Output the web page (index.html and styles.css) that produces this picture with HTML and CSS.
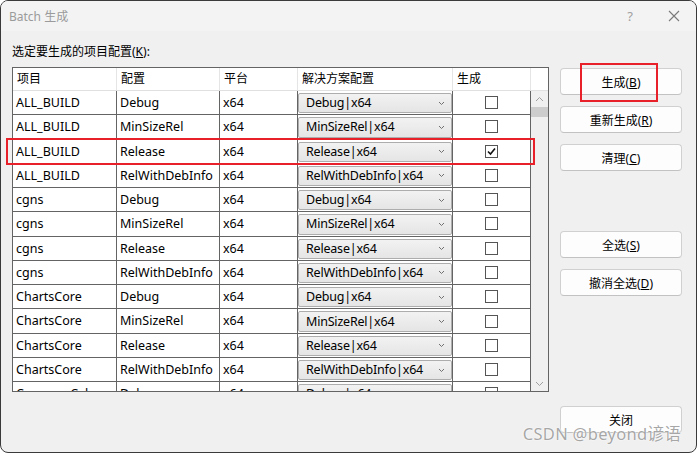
FILE: index.html
```html
<!DOCTYPE html>
<html lang="zh-CN">
<head>
    <meta charset="UTF-8">
    <title>Batch 生成</title>
    <link rel="stylesheet" href="styles.css">
</head>
<body>
    <div class="window">
        <div class="titlebar">
            <span class="title">Batch 生成</span>
            <span class="help">?</span>
            <svg class="close" width="12" height="12" viewBox="0 0 12 12">
                <path d="M1 1 L11 11 M11 1 L1 11" stroke="#7a7a7a" stroke-width="1.1" fill="none"/>
            </svg>
        </div>
        <div class="content">
            <div class="label">选定要生成的项目配置(<u>K</u>):</div>
            <div class="main">
                <div class="grid">
                    <div class="head">
                        <div class="hcell c1">项目</div>
                        <div class="hcell c2">配置</div>
                        <div class="hcell c3">平台</div>
                        <div class="hcell c4">解决方案配置</div>
                        <div class="hcell c5">生成</div>
                        <div class="hcorner"></div>
                    </div>
                    <div class="body">
                        <div class="rows" id="rows"></div>
                        <div class="scrollbar">
                            <div class="arrow">
                                <svg width="9" height="6" viewBox="0 0 9 6"><path d="M1 5 L4.5 1.5 L8 5" stroke="#a0a0a0" fill="none"/></svg>
                            </div>
                            <div class="thumb"></div>
                            <div class="track"></div>
                            <div class="arrow">
                                <svg width="9" height="6" viewBox="0 0 9 6"><path d="M1 1 L4.5 4.5 L8 1" stroke="#a0a0a0" fill="none"/></svg>
                            </div>
                        </div>
                    </div>
                </div>
                <div class="side">
                    <button class="btn">生成(<u>B</u>)</button>
                    <button class="btn">重新生成(<u>R</u>)</button>
                    <button class="btn">清理(<u>C</u>)</button>
                    <button class="btn">全选(<u>S</u>)</button>
                    <button class="btn">撤消全选(<u>D</u>)</button>
                </div>
            </div>
            <div class="footer">
                <button class="btn">关闭</button>
            </div>
        </div>
        <div class="mark mark-build"></div>
        <div class="mark mark-row"></div>
        <div class="watermark">CSDN @beyond谚语</div>
    </div>

    <script>
        const projects = ['ALL_BUILD', 'cgns', 'ChartsCore', 'CommonCalc'];
        const configs = ['Debug', 'MinSizeRel', 'Release', 'RelWithDebInfo'];
        const rowsElement = document.getElementById('rows');

        const chevron = '<svg class="chev" width="7" height="5" viewBox="0 0 7 5"><path d="M1 1 L3.5 3.5 L6 1" stroke="#707070" fill="none"/></svg>';
        const tick = '<svg width="11" height="11" viewBox="0 0 11 11"><path d="M2 5.5 L4.5 8 L9 2.5" stroke="#111" stroke-width="1.6" fill="none"/></svg>';

        let html = '';
        projects.forEach((project, p) => {
            configs.forEach((config, c) => {
                if (p === 3 && c > 0) return;
                const checked = p === 0 && config === 'Release';
                html += `
                <div class="row">
                    <div class="cell c1">${project}</div>
                    <div class="cell c2">${config}</div>
                    <div class="cell c3">x64</div>
                    <div class="cell c4"><div class="combo"><span>${config}|x64</span>${chevron}</div></div>
                    <div class="cell c5"><span class="check">${checked ? tick : ''}</span></div>
                </div>`;
            });
        });
        rowsElement.innerHTML = html;
    </script>
</body>
</html>
```

FILE: styles.css
```css
html, body {
    margin: 0;
    background: #ffffff;
}
body {
    font-family: "Noto Sans", "Noto Sans CJK SC", sans-serif;
    font-size: 12px;
    color: #000;
}
.window {
    position: relative;
    box-sizing: border-box;
    width: 697px;
    height: 453px;
    border: 1px solid #3a3a3a;
    border-radius: 8px;
    background: #f0f0f0;
    overflow: hidden;
}
.titlebar {
    display: flex;
    align-items: center;
    height: 30px;
    padding-left: 8px;
    background: #f3f3f3;
}
.title {
    color: #9b9b9b;
    font-size: 12px;
    flex: 1;
}
.help {
    color: #a0a0a0;
    font-size: 13px;
    margin-right: 35px;
}
.close {
    margin-right: 16px;
}
.content {
    padding: 13px 0 0 11px;
}
.label {
    line-height: 16px;
    margin-bottom: 7px;
}
.main {
    display: flex;
    align-items: flex-start;
}
.grid {
    width: 535px;
    border: 1px solid #646464;
    background: #ffffff;
}
.head {
    display: flex;
    height: 23px;
    box-sizing: border-box;
    border-bottom: 1px solid #e0e0e0;
}
.hcell {
    box-sizing: border-box;
    border-right: 1px solid #e5e5e5;
    padding: 2px 0 0 4px;
    line-height: 18px;
}
.hcorner {
    flex: 1;
}
.c1 { width: 104px; }
.c2 { width: 103px; }
.c3 { width: 78px; }
.c4 { width: 155px; }
.c5 { width: 78px; }
.body {
    display: flex;
    height: 300px;
}
.rows {
    width: 518px;
    height: 300px;
    overflow: hidden;
}
.row {
    display: flex;
    height: 24.27px;
    box-sizing: border-box;
    border-bottom: 1px solid #646464;
}
.cell {
    box-sizing: border-box;
    border-right: 1px solid #646464;
    padding-left: 3px;
    font-size: 12.5px;
    line-height: 23px;
    white-space: nowrap;
    overflow: hidden;
}
.cell.c4 {
    padding: 2px 0 1px 0;
}
.combo {
    display: flex;
    align-items: center;
    justify-content: space-between;
    box-sizing: border-box;
    height: 100%;
    border: 1px solid #adadad;
    border-radius: 2px;
    padding: 0 6px 0 7px;
    background: linear-gradient(#f2f2f2, #e5e5e5);
    line-height: 18px;
    letter-spacing: -0.2px;
}
.cell.c5 {
    display: flex;
    align-items: center;
    justify-content: center;
    padding: 0;
}
.check {
    display: flex;
    align-items: center;
    justify-content: center;
    box-sizing: border-box;
    width: 13px;
    height: 13px;
    border: 1px solid #555;
    background: #fff;
}
.scrollbar {
    display: flex;
    flex-direction: column;
    width: 17px;
    background: #f0f0f0;
}
.arrow {
    display: flex;
    align-items: center;
    justify-content: center;
    height: 15px;
}
.thumb {
    margin-top: 1px;
    height: 10px;
    background: #cdcdcd;
}
.track {
    flex: 1;
}
.side {
    display: flex;
    flex-direction: column;
    margin-left: 11px;
    padding-top: 1px;
}
.btn {
    box-sizing: border-box;
    width: 122px;
    height: 27px;
    margin-bottom: 11px;
    border: 1px solid #d0d0d0;
    border-bottom-color: #c2c2c2;
    border-radius: 4px;
    background: #fdfdfd;
    font-family: inherit;
    font-size: 12px;
    color: #000;
    padding: 0;
}
.side .btn:nth-child(3) {
    margin-bottom: 60px;
}
.footer {
    display: flex;
    justify-content: flex-end;
    margin-top: 14px;
    padding-right: 14px;
}
.footer .btn {
    margin-bottom: 0;
}
.mark {
    position: absolute;
    box-sizing: border-box;
    border: 2px solid #e8202a;
}
.mark-build {
    left: 579px;
    top: 62px;
    width: 78px;
    height: 39px;
}
.mark-row {
    left: 5px;
    top: 137px;
    width: 529px;
    height: 27px;
}
.watermark {
    position: absolute;
    right: 15px;
    bottom: 7px;
    font-size: 16.5px;
    letter-spacing: 0.3px;
    color: rgba(150, 150, 150, 0.85);
    text-shadow: 0 0 2px #fff, 0 0 1px #fff;
    line-height: 22px;
}
```
